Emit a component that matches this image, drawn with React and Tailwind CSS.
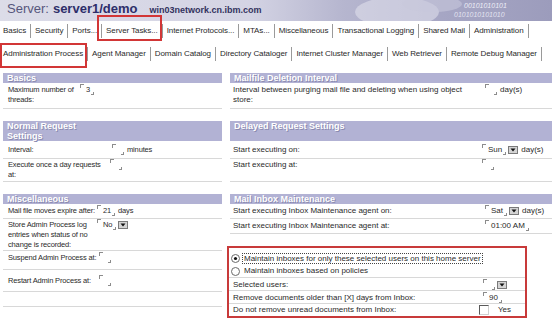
import React from "react";

const tabs1 = ["Basics", "Security", "Ports...", "Server Tasks...", "Internet Protocols...", "MTAs...", "Miscellaneous", "Transactional Logging", "Shared Mail", "Administration"];
const tabs2 = ["Administration Process", "Agent Manager", "Domain Catalog", "Directory Cataloger", "Internet Cluster Manager", "Web Retriever", "Remote Debug Manager"];

function TabRow({ items, boxed, rowCls, boxCls }) {
  return (
    <div className={`flex items-center pl-[3px] tracking-[-0.08px] ${rowCls}`}>
      {items.map((t) => (
        <div key={t} className="flex items-center h-full">
          <span className="relative h-full flex items-center whitespace-nowrap">
            {t}
            {t === boxed && <span className={`absolute border-2 border-[#d23636] ${boxCls}`} />}
          </span>
          <span className="mx-[4px] w-px h-[14px] bg-[#9a9a9a]" />
        </div>
      ))}
    </div>
  );
}

function Head({ children, tall }) {
  return (
    <div className={`bg-[#b2b2d4] text-white font-bold text-[9px] tracking-normal leading-[10px] pl-[4px] [text-shadow:1px_1px_0_#8a8ab0] ${tall ? "h-[20px]" : "h-[10px]"}`}>
      {children}
    </div>
  );
}

function Row({ label, lw, cls, children }) {
  return (
    <div className={`flex border-b border-[#d8d8d8] leading-[10px] ${cls}`}>
      <div className={`shrink-0 whitespace-nowrap ${lw}`}>{label}</div>
      <div className="flex items-start whitespace-nowrap">{children}</div>
    </div>
  );
}

function DropBtn() {
  return (
    <svg width="10" height="8" viewBox="0 0 10 8" className="ml-[2px] mt-[1px]">
      <rect x="0.5" y="0.5" width="9" height="7" fill="#d4d4d4" stroke="#7a7a7a" />
      <path d="M2.5 2.5h5L5 5.5z" fill="#111" />
    </svg>
  );
}

function Field({ v, drop, unit }) {
  return (
    <span className="inline-flex items-start">
      <span className="mt-[-1px] w-[4px] h-[4px] border-l border-t border-[#8c8c8c]" />
      <span className="ml-[2px] min-w-[2px]">{v}</span>
      <span className="mt-[7px] ml-[1px] w-[3px] h-[3px] border-r border-b border-[#8c8c8c]" />
      {drop && <DropBtn />}
      {unit && <span className="ml-[3px]">{unit}</span>}
    </span>
  );
}

function Radio({ on }) {
  return (
    <svg width="9" height="9" viewBox="0 0 9 9">
      <circle cx="4.5" cy="4.5" r="4" fill="#fff" stroke="#6a6a6a" />
      {on && <circle cx="4.5" cy="4.5" r="1.6" fill="#111" />}
    </svg>
  );
}

export default function App() {
  return (
    <div className="w-[552px] h-[320px] overflow-hidden bg-white text-[8px] text-[#2a2a2a] [font-family:'Liberation_Sans',Arial,sans-serif]">
      <div className="relative h-[21px] overflow-hidden bg-[linear-gradient(90deg,#dcdce8_0%,#d4d4e4_45%,#b6b6cf_62%,#a6a6c4_80%,#9c9cbc_100%)]">
        <div className="relative flex items-baseline pl-[7px] leading-[17px]">
          <span className="text-[13px] text-[#56567c]">Server:</span>
          <span className="ml-[4px] text-[13px] font-bold text-[#2e2e6a]">server1/demo</span>
          <span className="ml-[12px] text-[9px] font-bold text-[#32325e]">win03network.cn.ibm.com</span>
        </div>
        <svg className="absolute right-0 top-0" width="240" height="21" viewBox="0 0 240 21">
          <ellipse cx="85" cy="12" rx="42" ry="15" fill="#e4e4ef" opacity="0.55" />
          <ellipse cx="120" cy="4" rx="30" ry="8" fill="#c8c8dc" opacity="0.6" />
          <text x="152" y="8" fontSize="7" fontStyle="italic" fill="#ececf6" fontFamily="Liberation Sans">00101010101</text>
          <text x="142" y="17" fontSize="7" fontStyle="italic" fill="#e2e2f0" fontFamily="Liberation Sans">0101010101010</text>
        </svg>
      </div>

      <TabRow items={tabs1} boxed="Server Tasks..." rowCls="h-[20px]" boxCls="top-[-6px] bottom-0 left-[-9px] right-[-4px]" />
      <TabRow items={tabs2} boxed="Administration Process" rowCls="mt-[2px] h-[22px]" boxCls="top-0 bottom-[-3px] left-[-3px] right-[-4px]" />

      <div className="mt-[8px] pl-[3px] grid grid-cols-[219px_322px] gap-x-[8px] gap-y-[12px] items-start">
        <div className="text-[7.5px] tracking-[-0.15px]">
          <Head>Basics</Head>
          <Row label={<>Maximum number of<br />threads:</>} lw="w-[77px] pl-[5px]" cls="pt-[2px] pb-[3px]">
            <Field v="3" />
          </Row>
        </div>
        <div>
          <Head>Mailfile Deletion Interval</Head>
          <Row label={<>Interval between purging mail file and deleting when using object<br />store:</>} lw="w-[255px] pl-[3px]" cls="pt-[2px] pb-[3px]">
            <Field v="" unit="day(s)" />
          </Row>
        </div>

        <div className="text-[7.5px] tracking-[-0.15px]">
          <Head tall>Normal Request<br />Settings</Head>
          <Row label="Interval:" lw="w-[109px] pl-[5px]" cls="pt-[4px] pb-[3px]">
            <Field v="" unit="minutes" />
          </Row>
          <Row label={<>Execute once a day requests<br />at:</>} lw="w-[107px] pl-[5px]" cls="pt-[1px] pb-[1px]">
            <Field v="" />
          </Row>
        </div>
        <div>
          <Head tall>Delayed Request Settings</Head>
          <Row label="Start executing on:" lw="w-[252px] pl-[3px]" cls="pt-[4px] pb-[3px]">
            <Field v="Sun" drop unit="day(s)" />
          </Row>
          <Row label="Start executing at:" lw="w-[252px] pl-[3px]" cls="pt-[1px] pb-[11px]">
            <Field v="" />
          </Row>
        </div>

        <div className="text-[7.5px] tracking-[-0.15px]">
          <Head>Miscellaneous</Head>
          <Row label="Mail file moves expire after:" lw="w-[94px] pl-[5px]" cls="pt-[2px] pb-[2px]">
            <Field v="21" unit="days" />
          </Row>
          <Row label={<>Store Admin Process log<br />entries when status of no<br />change is recorded:</>} lw="w-[94px] pl-[5px]" cls="pt-[1px] pb-0">
            <Field v="No" drop />
          </Row>
          <Row label="Suspend Admin Process at:" lw="w-[96px] pl-[5px]" cls="pt-[2px] pb-[6px]">
            <Field v="" />
          </Row>
          <Row label="Restart Admin Process at:" lw="w-[96px] pl-[5px]" cls="pt-[6px] pb-[5px]">
            <Field v="" />
          </Row>
          <div className="h-[15px] border-b border-[#d8d8d8]" />
        </div>
        <div>
          <Head>Mail Inbox Maintenance</Head>
          <Row label="Start executing Inbox Maintenance agent on:" lw="w-[255px] pl-[3px]" cls="pt-[2px] pb-[2px]">
            <Field v="Sat" drop unit="day(s)" />
          </Row>
          <Row label="Start executing Inbox Maintenance agent at:" lw="w-[255px] pl-[3px]" cls="pt-[2px] pb-[2px]">
            <Field v="01:00 AM" />
          </Row>

          <div className="mt-[12px] ml-[-3px] w-[300px] border-2 border-[#c83a3a]">
            <div className="mt-[4px] h-[13px] flex items-center pl-[2px]">
              <Radio on />
              <span className="ml-[2px] border border-dotted border-[#444] px-[1px] leading-[9px] whitespace-nowrap">
                Maintain inboxes for only these selected users on this home server
              </span>
            </div>
            <div className="h-[13px] flex items-center pl-[2px] border-b border-[#d8d8d8]">
              <Radio />
              <span className="ml-[4px] whitespace-nowrap">Maintain inboxes based on policies</span>
            </div>
            <Row label="Selected users:" lw="w-[254px] pl-[4px]" cls="h-[13px] pt-[2px]">
              <Field v="" drop />
            </Row>
            <Row label="Remove documents older than [X] days from Inbox:" lw="w-[254px] pl-[4px]" cls="h-[13px] pt-[2px]">
              <Field v="90" />
            </Row>
            <div className="flex h-[12px] items-center leading-[10px]">
              <div className="w-[250px] pl-[4px] whitespace-nowrap">Do not remove unread documents from Inbox:</div>
              <span className="w-[10px] h-[10px] border border-t-[#5a5a5a] border-l-[#5a5a5a] border-r-[#d0d0d0] border-b-[#d0d0d0] bg-white" />
              <span className="ml-[9px]">Yes</span>
            </div>
          </div>
        </div>
      </div>
    </div>
  );
}
